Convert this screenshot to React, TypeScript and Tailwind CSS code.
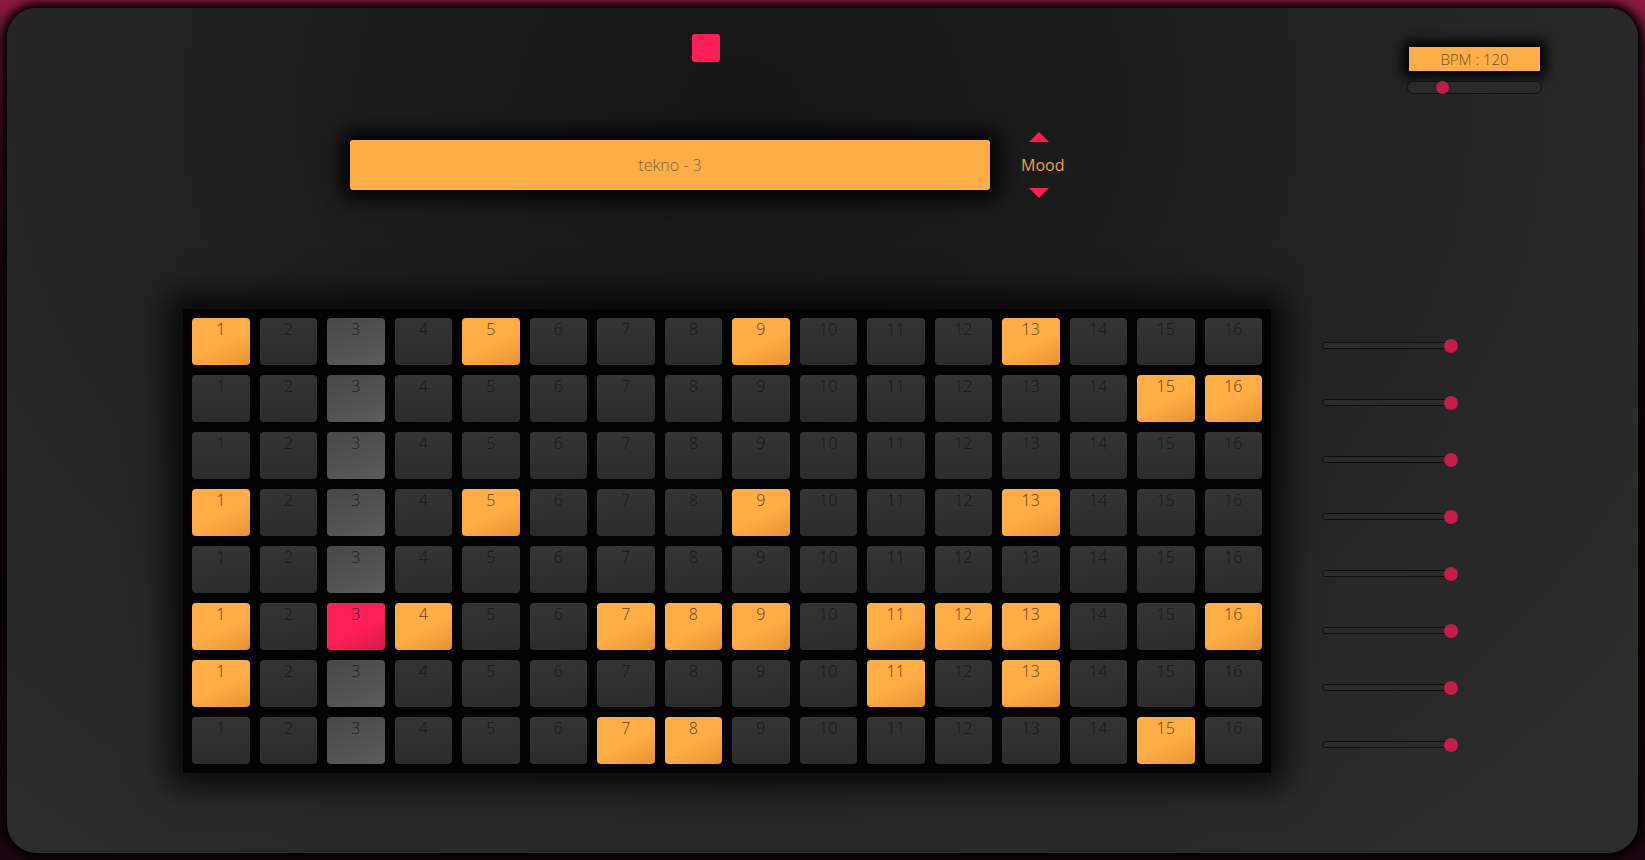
import React from "react";

type PadState = "off" | "on" | "cursor" | "hit";

// rows of active steps (1-based)
const PATTERN: number[][] = [
  [1, 5, 9, 13],
  [15, 16],
  [],
  [1, 5, 9, 13],
  [],
  [1, 3, 4, 7, 8, 9, 11, 12, 13, 16],
  [1, 11, 13],
  [7, 8, 15],
];

const CURRENT_STEP = 3;

function padClass(s: PadState): string {
  if (s === "on")
    return "bg-[linear-gradient(155deg,#ffae46_55%,#e3922f)] text-[#5b4326]";
  if (s === "hit")
    return "bg-[linear-gradient(155deg,#ff1f57_55%,#d8184a)] text-[#3a1020]";
  if (s === "cursor")
    return "bg-[linear-gradient(155deg,#474747,#5c5c5c)] text-[#1c1c2a]";
  return "bg-[linear-gradient(175deg,#353535,#2b2b2b)] text-[#191919]";
}

function Pad({ n, state }: { n: number; state: PadState }) {
  return (
    <div
      className={`flex h-[47px] justify-center rounded-[4px] pt-[1px] text-[16px] font-light leading-[20px] ${padClass(state)}`}
    >
      {n}
    </div>
  );
}

function RowSlider() {
  return (
    <div className="flex h-[47px] items-center">
      <div className="relative h-[7px] w-[130px] rounded-full border border-[#0e0e0e] bg-[#2b2b2b]">
        <span className="absolute right-[-7px] top-1/2 h-[14px] w-[14px] -translate-y-1/2 rounded-full bg-[#c41d4b]" />
      </div>
    </div>
  );
}

export default function App() {
  return (
    <div
      className="h-[860px] w-[1645px] overflow-hidden bg-[linear-gradient(180deg,#8d1a3d_0%,#5a1230_6%,#1a050d_35%,#0a0205_70%,#1c0710_100%)] pl-[7px] pt-[8px]"
      style={{ fontFamily: '"Open Sans", "Liberation Sans", sans-serif' }}
    >
      <div className="h-[845px] w-[1631px] rounded-[30px] bg-[radial-gradient(ellipse_at_45%_12%,#151515_0%,#1c1c1c_30%,#262626_60%,#2c2c2c_90%)] shadow-[0_0_10px_5px_#000]">
        {/* top row */}
        <div className="flex items-start">
          <button className="ml-[685px] mt-[26px] h-[28px] w-[28px] rounded-[3px] bg-[#ff1f57]" />
          <div className="ml-auto mr-[96px] mt-[39px] flex flex-col items-center">
            <div className="flex h-[24px] w-[131px] items-center justify-center bg-[#ffad45] text-[15px] font-light text-[#6b5230] shadow-[0_0_12px_6px_#000]">
              BPM : 120
            </div>
            <div className="relative mt-[10px] h-[13px] w-[135px] rounded-full border border-[#121212] bg-[#2a2a2a]">
              <span className="absolute left-[28px] top-[-1px] h-[13px] w-[13px] rounded-full bg-[#c01c4a]" />
            </div>
          </div>
        </div>

        {/* mood row */}
        <div className="mt-[38px] flex items-center">
          <div className="ml-[343px] flex h-[50px] w-[640px] items-center justify-center rounded-[3px] bg-[#ffad45] text-[16px] font-light text-[#7b6548] shadow-[0_0_18px_8px_#000]">
            tekno - 3
          </div>
          <div className="ml-[31px] flex flex-col items-center">
            <span className="mr-[8px] h-0 w-0 border-x-[10px] border-b-[10px] border-x-transparent border-b-[#ff1f57]" />
            <span className="mt-[12px] text-[16px] leading-[22px] text-[#f0a040]">Mood</span>
            <span className="mr-[8px] mt-[12px] h-0 w-0 border-x-[10px] border-t-[10px] border-x-transparent border-t-[#ff1f57]" />
          </div>
        </div>

        {/* sequencer */}
        <div className="mt-[111px] flex items-start">
          <div className="ml-[176px] bg-[#030303] p-[9px] shadow-[0_0_30px_14px_rgba(0,0,0,0.8)]">
            <div className="grid grid-cols-[repeat(16,57.5px)] gap-x-[10px] gap-y-[10px]">
              {PATTERN.map((row, r) =>
                Array.from({ length: 16 }, (_, i) => {
                  const n = i + 1;
                  const on = row.includes(n);
                  const cur = n === CURRENT_STEP;
                  const state: PadState = on && cur ? "hit" : on ? "on" : cur ? "cursor" : "off";
                  return <Pad key={`${r}-${n}`} n={n} state={state} />;
                }),
              )}
            </div>
          </div>
          <div className="ml-[51px] flex flex-col gap-[10px] pt-[13px]">
            {PATTERN.map((_, r) => (
              <RowSlider key={r} />
            ))}
          </div>
        </div>
      </div>
    </div>
  );
}
